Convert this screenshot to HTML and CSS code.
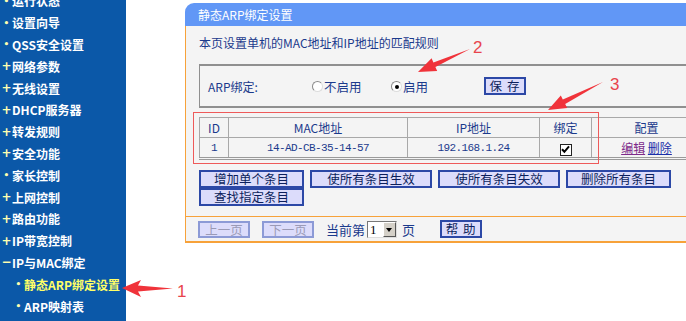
FILE: index.html
```html
<!DOCTYPE html>
<html lang="zh-CN">
<head>
<meta charset="UTF-8" />
<title>静态ARP绑定设置</title>
<link rel="stylesheet" href="styles.css">
</head>
<body>
<div class="page">
    <nav class="menu">
        <ul>
            <li class="dot">运行状态</li>
            <li class="dot">设置向导</li>
            <li class="dot">QSS安全设置</li>
            <li class="plus">网络参数</li>
            <li class="plus">无线设置</li>
            <li class="plus">DHCP服务器</li>
            <li class="plus">转发规则</li>
            <li class="plus">安全功能</li>
            <li class="dot">家长控制</li>
            <li class="plus">上网控制</li>
            <li class="plus">路由功能</li>
            <li class="plus">IP带宽控制</li>
            <li class="minus">IP与MAC绑定</li>
            <li class="sub active">静态ARP绑定设置</li>
            <li class="sub">ARP映射表</li>
        </ul>
    </nav>

    <main class="content">
        <section class="panel">
            <h1 class="panel-title">静态ARP绑定设置</h1>
            <div class="panel-body">
                <p class="intro">本页设置单机的MAC地址和IP地址的匹配规则</p>

                <div class="switch-box">
                    <span class="switch-label">ARP绑定:</span>
                    <span class="radio"><span class="radio-dot"></span>不启用</span>
                    <span class="radio"><span class="radio-dot on"></span>启用</span>
                    <button class="btn btn-save">保 存</button>
                </div>

                <table class="bind-table">
                    <tr>
                        <th class="col-id">ID</th>
                        <th class="col-mac">MAC地址</th>
                        <th class="col-ip">IP地址</th>
                        <th class="col-bind">绑定</th>
                        <th class="col-cfg">配置</th>
                    </tr>
                    <tr>
                        <td class="mono">1</td>
                        <td class="mono">14-AD-CB-35-14-57</td>
                        <td class="mono">192.168.1.24</td>
                        <td><span class="check"><svg viewBox="0 0 9 9" width="9" height="9"><path d="M1 4.2 L3.4 6.8 L8 1.4" fill="none" stroke="#000" stroke-width="2"/></svg></span></td>
                        <td><a class="link edit">编辑</a> <a class="link">删除</a></td>
                    </tr>
                </table>

                <div class="actions">
                    <button class="btn w-s">增加单个条目</button>
                    <button class="btn w-l">使所有条目生效</button>
                    <button class="btn w-l">使所有条目失效</button>
                    <button class="btn w-s">删除所有条目</button>
                    <button class="btn w-s">查找指定条目</button>
                </div>
            </div>

            <div class="pager">
                <button class="btn off">上一页</button>
                <button class="btn off">下一页</button>
                <span class="pager-text">当前第</span>
                <span class="select"><span class="select-val">1</span><span class="select-arrow"></span></span>
                <span class="pager-text">页</span>
                <button class="btn btn-help">帮 助</button>
            </div>
        </section>
    </main>

    <!-- 标注：红框、箭头和编号 -->
    <svg class="marks" width="686" height="321" viewBox="0 0 686 321">
        <rect x="193.5" y="112.5" width="405" height="51" fill="none" stroke="#ee5a5a" stroke-width="1"/>
        <polygon fill="#f0333a" points="122,288 141,280 138,285.5 173,288.5 138,291.5 141,297"/>
        <polygon fill="#f0333a" points="418,72 437.2,71.1 435.4,67 470,49 433.4,62.4 431.6,58.3"/>
        <polygon fill="#f0333a" points="548,110 567.2,107.9 565.2,103.9 603,82 562.8,99.5 560.8,95.5"/>
        <text x="177" y="297" class="mark-num">1</text>
        <text x="473" y="53" class="mark-num">2</text>
        <text x="610" y="90" class="mark-num">3</text>
    </svg>
</div>
</body>
</html>
```

FILE: styles.css
```css
*{margin:0;padding:0;box-sizing:border-box}
html,body{width:686px;height:321px;overflow:hidden;background:#fff}
body{
    font-family:"Noto Sans CJK SC","Liberation Sans",sans-serif;
    font-size:12px;
    color:#1b3a8c;
}
.page{
    position:relative;
    display:flex;
    width:686px;
    height:321px;
    overflow:hidden;
}

/* 左侧菜单 */
.menu{
    width:126px;
    flex:none;
    background:#0b58a8;
    color:#fff;
    overflow:hidden;
}
.menu ul{list-style:none;margin-top:-10px}
.menu li{
    display:flex;
    align-items:center;
    height:21.8px;
    padding-left:1px;
    font-size:12px;
    font-weight:bold;
    white-space:nowrap;
}
.menu li::before{
    width:11px;
    flex:none;
    color:#ffffb0;
    text-align:center;
    font-family:"DejaVu Sans",sans-serif;
}
.menu li.dot::before{content:"•";font-size:9px}
.menu li.plus::before{content:"+";font-size:12px}
.menu li.minus::before{content:"−";font-size:12px}
.menu li.sub{padding-left:13px}
.menu li.sub::before{content:"•";font-size:9px}
.menu li.active{color:#ffff66}

/* 右侧内容 */
.content{
    flex:1;
    padding:3px 0 0 59px;
    overflow:hidden;
}
.panel{width:560px}
.panel-title{
    height:23px;
    line-height:23px;
    padding-left:13px;
    background:#6197f6;
    border-top-left-radius:9px;
    color:#fff;
    font-size:12px;
    font-weight:normal;
}
.panel-body{
    background:#f4f4f4;
    border-left:1px solid #f7a23a;
    padding:8px 0 10px 13px;
}
.intro{line-height:18px}

.switch-box{
    display:flex;
    align-items:center;
    height:44px;
    margin-top:12px;
    padding:0 0 0 8px;
    border-top:2px solid #8f8f8f;
    border-left:1px solid #8f8f8f;
    border-bottom:2px solid #8f8f8f;
}
.switch-label{width:104px}
.radio{display:flex;align-items:center;width:79px;font-size:12.5px}
.radio-dot{
    width:11px;height:11px;
    margin-right:1px;
    border-radius:50%;
    border:1px solid #8a8a8a;
    border-right-color:#ddd;border-bottom-color:#ddd;
    background:#fff;
    position:relative;
}
.radio-dot.on::after{
    content:"";
    position:absolute;
    left:3px;top:3px;
    width:4px;height:4px;
    border-radius:50%;
    background:#000;
}

.btn{
    height:18px;
    border:2px solid #2c48a6;
    background:#dcdcfb;
    color:#0c1f5c;
    font-family:inherit;
    font-size:12.5px;
    line-height:14px;
    padding:0;
}
.btn-save{width:42px;margin-left:14px;letter-spacing:1px}

/* 绑定列表 */
.bind-table{
    margin-top:9px;
    width:503px;
    border-collapse:collapse;
    border-bottom:3px double #9a9a9a;
}
.bind-table th,.bind-table td{
    height:20px;
    border:1px solid #a8a8a8;
    text-align:center;
    font-weight:normal;
    padding:0;
}
.bind-table td{height:21px}
.col-id{width:29px}
.col-mac{width:179px}
.col-ip{width:132px}
.col-bind{width:52px}
.mono{
    font-family:"Liberation Mono",monospace;
    font-size:11px;
    letter-spacing:-0.6px;
}
.check{
    display:inline-flex;
    align-items:center;
    justify-content:center;
    width:12px;height:12px;
    border:1px solid #222;
    background:#fff;
    vertical-align:middle;
}
.link{color:#1a2fa8;text-decoration:underline}
.link.edit{color:#7e2a8a}

.actions{
    display:flex;
    flex-wrap:wrap;
    column-gap:6px;
    width:480px;
    margin-top:10px;
}
.w-s{width:105px}
.w-l{width:122px}

/* 翻页 */
.pager{
    display:flex;
    align-items:center;
    height:27px;
    padding-left:12px;
    background:#f4f4f4;
    border-top:1px solid #f7a23a;
    border-bottom:2px solid #f7a23a;
    border-left:1px solid #f7a23a;
}
.btn.off{
    width:52px;
    height:17px;
    margin-right:12px;
    border-color:#8c9ad6;
    color:#9a9ab6;
}
.pager-text{font-size:13px;margin-right:2px}
.select{
    display:flex;
    width:30px;height:17px;
    margin:0 5px 0 0;
    border:1px solid #777;
    border-right-color:#ddd;border-bottom-color:#ddd;
    background:#fff;
}
.select-val{flex:1;font-family:"Liberation Serif",serif;font-size:13px;line-height:15px;padding-left:2px;color:#000}
.select-arrow{
    width:13px;
    background:#d4d0c8;
    border:1px solid;
    border-color:#fff #555 #555 #fff;
    position:relative;
}
.select-arrow::after{
    content:"";
    position:absolute;
    left:2px;top:5px;
    border-width:4px 3.5px 0 3.5px;
    border-style:solid;
    border-color:#000 transparent transparent transparent;
}
.btn-help{width:42px;margin-left:23px;letter-spacing:1px}

/* 标注层 */
.marks{position:absolute;left:0;top:0;pointer-events:none}
.mark-num{font-family:"Liberation Sans",sans-serif;font-size:17px;fill:#e8444c}
```
